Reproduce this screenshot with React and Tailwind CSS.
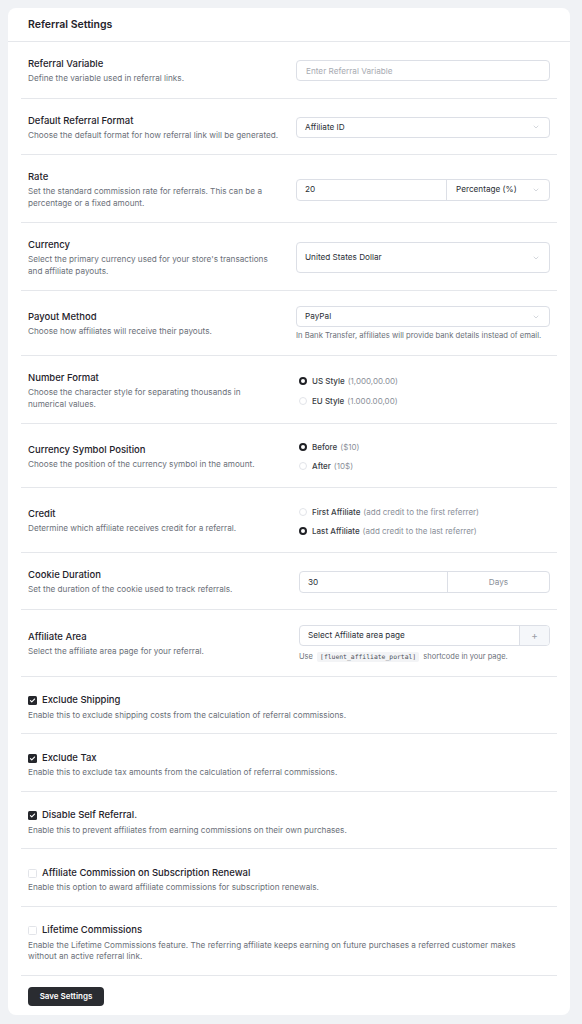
import React from "react";

const Chevron = () => (
  <svg width="8" height="8" viewBox="0 0 24 24" fill="none" stroke="#c0c4cc" strokeWidth="2" strokeLinecap="round" strokeLinejoin="round">
    <path d="M6 9l6 6 6-6" />
  </svg>
);

const Radio = ({ checked, label, note }) => (
  <div className="flex items-center h-[14px]">
    {checked ? (
      <span className="w-[8px] h-[8px] rounded-full border-[2.5px] border-[#1f2025] bg-white shrink-0" />
    ) : (
      <span className="w-[8px] h-[8px] rounded-full border border-[#e2e4e9] bg-white shrink-0" />
    )}
    <span className="ml-[5px] text-[8px] text-[#3a3d45] font-medium">{label}</span>
    <span className="ml-[3px] text-[8px] text-[#8a8f99]">{note}</span>
  </div>
);

const Check = ({ checked }) =>
  checked ? (
    <span className="w-[9px] h-[9px] rounded-[1.5px] bg-[#25272c] flex items-center justify-center shrink-0">
      <svg width="7" height="7" viewBox="0 0 24 24" fill="none" stroke="white" strokeWidth="4" strokeLinecap="round" strokeLinejoin="round">
        <path d="M5 12.5l4.5 4.5L19 7" />
      </svg>
    </span>
  ) : (
    <span className="w-[9px] h-[9px] rounded-[1.5px] border border-[#e2e4e9] bg-white shrink-0" />
  );

const Row = ({ title, desc, children }) => (
  <div className="flex items-center justify-between px-[7px] pt-[15px] pb-[13px] border-b border-[#e5e7eb]">
    <div className="w-[252px]">
      <p className="text-[9.5px] leading-[14px] font-medium text-[#1f232b]">{title}</p>
      <p className="mt-[2px] text-[8.2px] leading-[11.5px] text-[#6b7079]">{desc}</p>
    </div>
    <div className="w-[254px]">{children}</div>
  </div>
);

const CheckRow = ({ checked, title, desc }) => (
  <div className="px-[7px] pt-[17px] pb-[12px] border-b border-[#e5e7eb]">
    <div className="flex items-center h-[14px]">
      <Check checked={checked} />
      <p className="ml-[5px] text-[9.5px] font-medium text-[#1f232b]">{title}</p>
    </div>
    <p className="mt-[2px] text-[8.2px] leading-[11.5px] text-[#6b7079] pr-[20px]">{desc}</p>
  </div>
);

const App = () => {
  return (
    <div className="min-h-screen bg-[#f0f2f5] p-[8px] pr-[12px] pb-[11px] font-['Inter',sans-serif]">
      <div className="bg-white rounded-[8px] w-[562px]">
        <div className="h-[34px] flex items-center px-[20px] border-b border-[#e5e7eb]">
          <h2 className="text-[10.5px] font-semibold text-[#1f232b]">Referral Settings</h2>
        </div>

        <div className="px-[13px]">
          <Row title="Referral Variable" desc="Define the variable used in referral links.">
            <div className="h-[21px] border border-[#dcdfe6] rounded-[4px] flex items-center px-[9px] text-[8.2px] text-[#a8abb2]">
              Enter Referral Variable
            </div>
          </Row>

          <Row title="Default Referral Format" desc="Choose the default format for how referral link will be generated.">
            <div className="h-[21px] border border-[#dcdfe6] rounded-[4px] flex items-center justify-between pl-[8px] pr-[9px] text-[8.2px] text-[#2b2f36]">
              <span>Affiliate ID</span>
              <Chevron />
            </div>
          </Row>

          <Row title="Rate" desc="Set the standard commission rate for referrals. This can be a percentage or a fixed amount.">
            <div className="h-[22px] border border-[#dcdfe6] rounded-[4px] flex text-[8.2px] text-[#2b2f36]">
              <div className="flex-1 flex items-center pl-[8px]">20</div>
              <div className="w-[103px] border-l border-[#dcdfe6] flex items-center justify-between pl-[9px] pr-[9px]">
                <span>Percentage (%)</span>
                <Chevron />
              </div>
            </div>
          </Row>

          <Row title="Currency" desc="Select the primary currency used for your store's transactions and affiliate payouts.">
            <div className="h-[31px] border border-[#dcdfe6] rounded-[4px] flex items-center justify-between pl-[8px] pr-[9px] text-[8.2px] text-[#2b2f36]">
              <span>United States Dollar</span>
              <Chevron />
            </div>
          </Row>

          <Row title="Payout Method" desc="Choose how affiliates will receive their payouts.">
            <div className="h-[21px] border border-[#dcdfe6] rounded-[4px] flex items-center justify-between pl-[8px] pr-[9px] text-[8.2px] text-[#2b2f36]">
              <span>PayPal</span>
              <Chevron />
            </div>
            <p className="mt-[3px] text-[7.7px] leading-[12px] text-[#6b7079] whitespace-nowrap">
              In Bank Transfer, affiliates will provide bank details instead of email.
            </p>
          </Row>

          <Row title="Number Format" desc="Choose the character style for separating thousands in numerical values.">
            <div className="pl-[3px] flex flex-col gap-[6px]">
              <Radio checked label="US Style" note="(1,000,00.00)" />
              <Radio label="EU Style" note="(1.000.00,00)" />
            </div>
          </Row>

          <Row title="Currency Symbol Position" desc="Choose the position of the currency symbol in the amount.">
            <div className="pl-[3px] flex flex-col gap-[5px] py-[1px]">
              <Radio checked label="Before" note="($10)" />
              <Radio label="After" note="(10$)" />
            </div>
          </Row>

          <Row title="Credit" desc="Determine which affiliate receives credit for a referral.">
            <div className="pl-[3px] flex flex-col gap-[5px] py-[1.5px]">
              <Radio label="First Affiliate" note="(add credit to the first referrer)" />
              <Radio checked label="Last Affiliate" note="(add credit to the last referrer)" />
            </div>
          </Row>

          <Row title="Cookie Duration" desc="Set the duration of the cookie used to track referrals.">
            <div className="ml-[3px] h-[22px] border border-[#dcdfe6] rounded-[4px] flex text-[8.2px]">
              <div className="flex-1 flex items-center pl-[8px] text-[#2b2f36]">30</div>
              <div className="w-[102px] border-l border-[#dcdfe6] flex items-center justify-center text-[#8a8f99]">
                Days
              </div>
            </div>
          </Row>

          <Row title="Affiliate Area" desc="Select the affiliate area page for your referral.">
            <div className="ml-[3px]">
              <div className="h-[21px] border border-[#dcdfe6] rounded-[4px] flex text-[8.2px] overflow-hidden">
                <div className="flex-1 flex items-center pl-[8px] text-[#2b2f36]">Select Affiliate area page</div>
                <div className="w-[30px] border-l border-[#dcdfe6] bg-[#f5f7fa] flex items-center justify-center text-[#9a9ea6] text-[10px]">
                  +
                </div>
              </div>
              <p className="mt-[5px] text-[7.5px] leading-[12px] text-[#6b7079] whitespace-nowrap">
                Use{" "}
                <code className="mx-[2px] px-[3px] py-[1px] bg-[#f3f4f6] rounded-[2px] text-[6.4px] font-['DejaVu_Sans_Mono',monospace] text-[#4b5058]">
                  [fluent_affiliate_portal]
                </code>{" "}
                shortcode in your page.
              </p>
            </div>
          </Row>

          <CheckRow checked title="Exclude Shipping" desc="Enable this to exclude shipping costs from the calculation of referral commissions." />
          <CheckRow checked title="Exclude Tax" desc="Enable this to exclude tax amounts from the calculation of referral commissions." />
          <CheckRow checked title="Disable Self Referral." desc="Enable this to prevent affiliates from earning commissions on their own purchases." />
          <CheckRow title="Affiliate Commission on Subscription Renewal" desc="Enable this option to award affiliate commissions for subscription renewals." />
          <CheckRow
            title="Lifetime Commissions"
            desc="Enable the Lifetime Commissions feature. The referring affiliate keeps earning on future purchases a referred customer makes without an active referral link."
          />
        </div>

        <div className="flex px-[20px] pt-[11px] pb-[9px]">
          <button className="h-[19px] w-[76px] bg-[#2a2c31] text-white text-[8px] font-semibold rounded-[4px]">
            Save Settings
          </button>
        </div>
      </div>
    </div>
  );
};

export default App;
